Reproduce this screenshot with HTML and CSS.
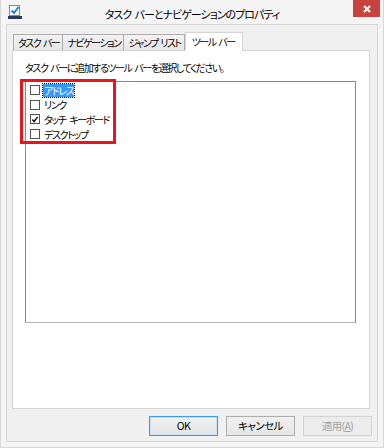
FILE: index.html
```html
<!DOCTYPE html>
<html lang="ja">
<head>
<meta charset="utf-8">
<link rel="stylesheet" href="styles.css">
</head>
<body>
<div class="window">
  <div class="titlebar">
    <svg class="app-icon" width="14" height="14" viewBox="0 0 14 14">
      <rect x="1.5" y="0.5" width="10" height="10" fill="#fff" stroke="#7a8a9a"/>
      <path d="M3.5 5.5 L6 8 L10.5 2" fill="none" stroke="#1c7fd8" stroke-width="2"/>
      <rect x="0" y="11" width="14" height="3" fill="#2a3a5a"/>
    </svg>
    <div class="title">タスク バーとナビゲーションのプロパティ</div>
    <div class="close">
      <svg width="10" height="10" viewBox="0 0 10 10"><path d="M2 2 L8 8 M8 2 L2 8" stroke="#fff" stroke-width="2"/></svg>
    </div>
  </div>
  <div class="client">
    <div class="tabs">
      <div class="tab">タスク バー</div>
      <div class="tab">ナビゲーション</div>
      <div class="tab">ジャンプ リスト</div>
      <div class="tab active">ツール バー</div>
    </div>
    <div class="panel">
      <div class="caption">タスク バーに追加するツール バーを選択してください。</div>
      <div class="listbox">
        <div class="item"><span class="cb"></span><span class="label selected">アドレス</span></div>
        <div class="item"><span class="cb"></span><span class="label">リンク</span></div>
        <div class="item"><span class="cb checked"><svg width="9" height="9" viewBox="0 0 9 9"><path d="M1.5 4.5 L3.5 6.8 L7.5 1.5" fill="none" stroke="#111" stroke-width="1.6"/></svg></span><span class="label">タッチ キーボード</span></div>
        <div class="item"><span class="cb"></span><span class="label">デスクトップ</span></div>
      </div>
      <div class="highlight"></div>
    </div>
    <div class="buttons">
      <div class="btn default">OK</div>
      <div class="btn">キャンセル</div>
      <div class="btn disabled">適用(<u>A</u>)</div>
    </div>
  </div>
</div>
</body>
</html>
```
FILE: styles.css
```css
* { box-sizing: border-box; }
html, body { margin: 0; padding: 0; }
body {
  width: 384px;
  height: 448px;
  background: #f4f4f4;
  font-family: "Noto Sans CJK JP", "Noto Sans", sans-serif;
  font-feature-settings: "palt";
  color: #000;
  overflow: hidden;
}
.window {
  width: 384px;
  height: 448px;
  display: flex;
  flex-direction: column;
  border-left: 1px solid #d8d8d8;
  border-right: 1px solid #d8d8d8;
  border-bottom: 1px solid #d8d8d8;
}
.titlebar {
  height: 24px;
  display: grid;
  grid-template-columns: 50px 1fr 50px;
  align-items: start;
}
.app-icon { margin: 5px 0 0 7px; }
.title {
  text-align: center;
  font-size: 11px;
  line-height: 14px;
  padding-top: 7px;
  letter-spacing: -1px;
  word-spacing: 2px;
}
.close {
  justify-self: end;
  width: 27px;
  height: 17px;
  margin-right: 3px;
  background: #c7433e;
  display: flex;
  align-items: center;
  justify-content: center;
}
.client {
  flex: 1;
  margin: 0 5px 5px 5px;
  background: #f0f0f0;
  border: 1px solid #d6d6d6;
  display: flex;
  flex-direction: column;
}
.tabs {
  display: flex;
  align-items: flex-end;
  padding-left: 6px;
  margin-top: 7px;
  height: 18px;
  position: relative;
  z-index: 1;
}
.tab {
  height: 16px;
  padding: 0 3px 0 4px;
  font-size: 10px;
  line-height: 15px;
  letter-spacing: -1.5px;
  word-spacing: 2px;
  border: 1px solid #acacac;
  border-bottom: none;
  border-right: none;
  background: linear-gradient(#f2f2f2, #e6e6e6);
  white-space: nowrap;
}
.tab:nth-child(3) { border-right: 1px solid #acacac; }
.tab.active {
  height: 19px;
  margin-bottom: -1px;
  background: #fff;
  border: 1px solid #d4d4d4;
  border-bottom: none;
  padding: 1px 7px 0 6px;
}
.panel {
  position: relative;
  margin: 0 7px 0 5px;
  height: 359px;
  background: #fff;
  border: 1px solid #d4d4d4;
  padding: 10px 13px 0 12px;
}
.caption {
  font-size: 10px;
  line-height: 14px;
  letter-spacing: -1.4px;
  word-spacing: 2px;
}
.listbox {
  margin-top: 6px;
  height: 242px;
  border: 1px solid #828790;
  border-bottom-color: #b5b5b5;
  padding-top: 1px;
}
.item {
  height: 14.6px;
  display: flex;
  align-items: center;
  padding-left: 4px;
  font-size: 10px;
}
.cb {
  width: 10px;
  height: 10px;
  border: 1px solid #555;
  background: #fff;
  display: flex;
  align-items: center;
  justify-content: center;
  margin-right: 3px;
}
.label {
  line-height: 13px;
  padding: 0 1px;
  letter-spacing: -1.4px;
  word-spacing: 3px;
}
.label.selected {
  background: #3399ff;
  color: #fff;
  outline: 1px dotted #000;
}
.highlight {
  position: absolute;
  left: 7px;
  top: 28px;
  width: 96px;
  height: 65px;
  border: 3px solid #e8151f;
}
.buttons {
  display: flex;
  justify-content: flex-end;
  gap: 8px;
  margin-top: 7px;
  padding-right: 5px;
}
.btn {
  width: 69px;
  height: 20px;
  border: 1px solid #adadad;
  background: linear-gradient(#f0f0f0, #e5e5e5);
  font-size: 10.5px;
  line-height: 18px;
  text-align: center;
  letter-spacing: -0.6px;
}
.btn.default {
  border-color: #3c9be6;
  box-shadow: inset 0 0 0 1px #c6e0f6;
}
.btn.disabled {
  color: #a3a3a3;
  border-color: #d3d3d3;
  background: #ececec;
}
```
